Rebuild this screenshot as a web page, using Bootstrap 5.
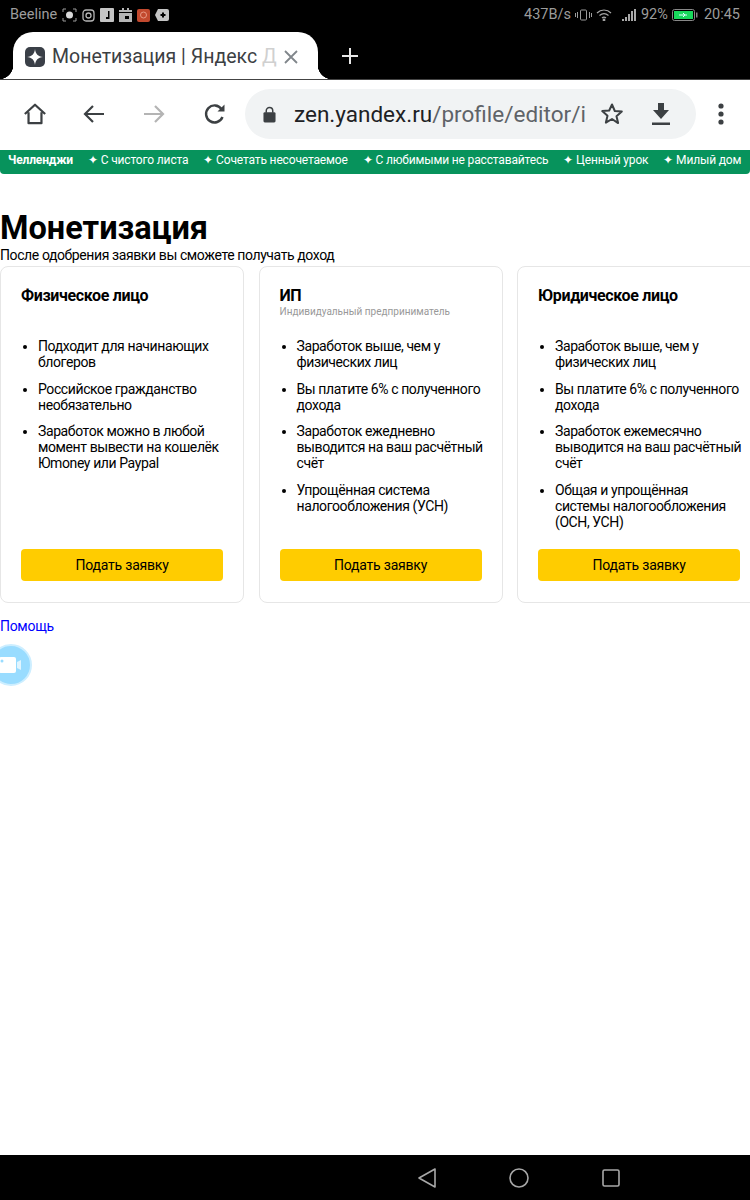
<!DOCTYPE html>
<html lang="ru">
<head>
  <meta charset="UTF-8" />
  <meta name="viewport" content="width=device-width, initial-scale=1" />
  <title>Монетизация | Яндекс Дзен</title>
  <link href="https://cdn.jsdelivr.net/npm/bootstrap@5.3.0/dist/css/bootstrap.min.css" rel="stylesheet" />
  <style>
    html, body { height: 1200px; overflow: hidden; }
    body { font-family: Roboto, "Liberation Sans", sans-serif; background: #fff; color: #000; }
    .phone { width: 750px; height: 1200px; overflow: hidden; }

    .status-row { height: 32px; background: #000; color: #9c9c9c; font-size: 14.5px; padding: 0 10px 2px; }
    .status-left { gap: 5px; }
    .status-time { margin-left: 6px; }
    .tab-row { height: 47px; background: #000; padding-left: 13px; }
    .tab-shape { width: 305px; height: 47px; background: #fff; border-radius: 20px 20px 0 0; padding: 3px 20px 0 12px; color: #3c4043; font-size: 19.5px; white-space: nowrap; position: relative; }
    .tab-shape::before, .tab-shape::after { content: ""; position: absolute; bottom: 0; width: 14px; height: 14px; }
    .tab-shape::before { left: -14px; background: radial-gradient(circle at 0 0, #000 14px, #fff 14.5px); }
    .tab-shape::after { right: -14px; background: radial-gradient(circle at 100% 0, #000 14px, #fff 14.5px); }
    .tab-icon { margin-right: 7px; }
    .tab-title span { color: #d0d0d0; }
    .new-tab { margin-left: 23px; }

    .tool-row { height: 71px; background: #fff; border-top: 1px solid #444; padding: 0 0 2px 23px; }
    .omnibox { width: 451px; height: 50px; background: #f1f3f4; border-radius: 25px; margin-left: 19px; padding: 0 0 0 18px; font-size: 22.5px; white-space: nowrap; }
    .url-text { width: 290px; color: #202124; margin-left: 18px; padding-top: 1px; }
    .url-text span { color: #5f6368; }

    .challenge-bar { height: 24px; background: #07935c; color: #fff; font-size: 12px; letter-spacing: -.15px; border-radius: 0 0 4px 4px; padding: 0 0 5px 8px; gap: 15px; white-space: nowrap; }

    .page-body { padding-top: 35px; }
    .page-title { font-size: 32.5px; font-weight: 700; line-height: 38px; margin: 0; }
    .page-sub { font-size: 14px; letter-spacing: -.4px; line-height: 17px; margin: 0; height: 19px; }

    .plans { gap: 14.5px; width: 790px; }
    .plan-card { width: 244px; height: 337px; border: 1px solid #e6e6e6; border-radius: 8px; padding: 19px 20px 21px; flex: none; }
    .plan-name { font-size: 16px; font-weight: 700; letter-spacing: -.35px; line-height: 20px; margin: 0; height: 20px; }
    .plan-note { font-size: 10px; line-height: 12px; color: #999; height: 32px; }
    .plan-list { font-size: 14px; letter-spacing: -.4px; line-height: 16px; padding-left: 17px; margin: 0 -4px 0 0; flex-grow: 1; }
    .plan-list li { margin-bottom: 10.5px; }
    .plan-btn { height: 32px; background: #fc0; color: #000; border-radius: 4px; border: 0; font-size: 14px; letter-spacing: -.2px; padding: 0; }

    .help-link { font-size: 14px; letter-spacing: -.3px; line-height: 18px; color: #00f; text-decoration: none; display: block; margin-top: 14px; }
    .rec-wrap { width: 32px; height: 42px; margin-top: 9px; margin-left: -10px; }
    .rec-dot { width: 42px; height: 42px; border-radius: 50%; background: #99dcff; border: 2px solid #cdeeff; flex: none; }

    .nav-row { height: 45px; background: #000; padding-left: 418px; gap: 73px; }
  </style>
</head>
<body>
  <div class="phone d-flex flex-column">
    <!-- status bar -->
    <div class="status-row d-flex align-items-center justify-content-between">
      <div class="status-left d-flex align-items-center">
        <span class="me-n1">Beeline</span>
        <svg width="15" height="14" viewBox="0 0 15 14" fill="none" stroke="#9c9c9c"><path d="M1 4V1h3M11 1h3v3M14 10v3h-3M4 13H1v-3"/><circle cx="7.5" cy="7" r="3.5" fill="#d8d8d8" stroke="none"/></svg>
        <svg width="13" height="13" viewBox="0 0 13 13" fill="none" stroke="#b5b5b5" stroke-width="1.3"><rect x="1" y="1" width="11" height="11" rx="3"/><circle cx="6.5" cy="6.5" r="2.5"/></svg>
        <svg width="14" height="14" viewBox="0 0 14 14"><rect width="14" height="14" rx="1" fill="#c4c4c4"/><path d="M8 3h1.5v8H6v-2h2z" fill="#000"/></svg>
        <svg width="13" height="14" viewBox="0 0 13 14"><path d="M0 2h13v2H0zM0 5h13v9H0z" fill="#b5b5b5"/><rect x="6" y="8" width="4" height="3" fill="#000"/><rect x="3" y="0" width="2" height="2" fill="#b5b5b5"/><rect x="8" y="0" width="2" height="2" fill="#b5b5b5"/></svg>
        <svg width="13" height="13" viewBox="0 0 13 13"><rect width="13" height="13" rx="2" fill="#c2492e"/><circle cx="6.5" cy="6" r="3" fill="none" stroke="#e89a85"/></svg>
        <svg width="14" height="12" viewBox="0 0 14 12"><path d="M3 0h9a2 2 0 0 1 2 2v8a2 2 0 0 1-2 2H3L0 6z" fill="#c4c4c4"/><path d="M7 3.500h2v1.500h1.500v2H9v1.500H7V7H5.500V5H7z" fill="#000"/></svg>
      </div>
      <div class="d-flex align-items-center">
        <span>437B/s</span>
        <svg class="ms-1" width="17" height="12" viewBox="0 0 17 12" fill="none" stroke="#9c9c9c" stroke-width="1"><rect x="5.500" y="1" width="6" height="10" rx="1"/><path d="M2.500 3v6M14.500 3v6M0.500 4v4M16.500 4v4"/></svg>
        <svg class="ms-1" width="16" height="12" viewBox="0 0 16 12" fill="none" stroke="#a8a8a8" stroke-width="1.200"><path d="M1 4c4-4 10-4 14 0M3.500 6.500c3-2.500 6-2.500 9 0M6 9c1.300-1 2.700-1 4 0"/><circle cx="8" cy="11" r="0.800" fill="#a8a8a8"/></svg>
        <svg style="margin-left:10px" width="15" height="12" viewBox="0 0 15 12" fill="#a8a8a8"><rect x="0" y="10" width="2" height="2"/><rect x="3" y="8" width="2" height="4"/><rect x="6" y="5" width="2" height="7"/><rect x="9" y="2" width="2" height="10"/><rect x="12" y="0" width="2" height="12"/></svg>
        <span class="ms-1">92%</span>
        <svg class="ms-1" width="26" height="12" viewBox="0 0 26 12"><rect x="0.500" y="0.500" width="22" height="11" rx="2" fill="#000" stroke="#888"/><rect x="2" y="2" width="19" height="8" fill="#18d95c"/><rect x="24" y="3.500" width="1.500" height="5" fill="#888"/><path d="M7 6h8M11 4l2 2-2 2" stroke="#dff" fill="none"/></svg>
        <span class="status-time">20:45</span>
      </div>
    </div>

    <!-- tabs -->
    <div class="tab-row d-flex align-items-end">
      <div class="tab-shape d-flex align-items-center">
        <svg width="20" height="20" viewBox="0 0 20 20" class="tab-icon flex-shrink-0"><rect width="20" height="20" rx="5" fill="#3a3f47"/><path d="M10 2c.5 5 3 7.500 8 8-5 .5-7.500 3-8 8-.5-5-3-7.500-8-8 5-.5 7.500-3 8-8z" fill="#fff"/></svg>
        <div class="tab-title">Монетизация | Яндекс <span>Д</span></div>
        <svg class="ms-auto flex-shrink-0" width="14" height="14" viewBox="0 0 14 14" stroke="#80868b" stroke-width="1.800"><path d="M1 1l12 12M13 1L1 13"/></svg>
      </div>
      <svg class="new-tab align-self-center" width="18" height="18" viewBox="0 0 18 18" stroke="#e8e8e8" stroke-width="2"><path d="M9 1v16M1 9h16"/></svg>
    </div>

    <!-- browser toolbar -->
    <div class="tool-row d-flex align-items-center">
      <svg width="24" height="24" viewBox="0 0 26 26" fill="none" stroke="#3c4043" stroke-width="2.400" stroke-linejoin="round"><path d="M2 13L13 3l11 10M6 11v12h14V11"/></svg>
      <svg style="margin-left:36px" width="22" height="20" viewBox="0 0 22 20" fill="none" stroke="#3c4043" stroke-width="2.200"><path d="M21 10H2M10 2l-8 8 8 8"/></svg>
      <svg style="margin-left:38px" width="22" height="20" viewBox="0 0 22 20" fill="none" stroke="#b4b4b4" stroke-width="2.200"><path d="M1 10h19M12 2l8 8-8 8"/></svg>
      <svg style="margin-left:39px" width="22" height="22" viewBox="0 0 22 22" fill="none" stroke="#3c4043" stroke-width="2.400"><path d="M18.500 14a8.500 8.500 0 1 1-1-8"/><path d="M20.500 1.500v7h-7z" fill="#3c4043" stroke="none"/></svg>
      <div class="omnibox d-flex align-items-center">
        <svg width="13" height="17" viewBox="0 0 14 18" class="flex-shrink-0"><rect x="0.500" y="6.500" width="13" height="11" rx="1.500" fill="#3c4043"/><path d="M3.500 7V5a3.500 3.500 0 0 1 7 0v2" fill="none" stroke="#3c4043" stroke-width="1.600"/></svg>
        <div class="url-text">zen.yandex.ru<span>/profile/editor/i</span></div>
        <svg class="flex-shrink-0" style="margin-left:16px" width="24" height="24" viewBox="0 0 24 24" fill="none" stroke="#3c4043" stroke-width="2" stroke-linejoin="round"><path d="M12 2.500l2.800 6.500 7 .6-5.300 4.600 1.600 6.900L12 17l-6.100 3.600 1.600-6.900L2.200 9.100l7-.6z"/></svg>
        <svg class="flex-shrink-0" style="margin-left:28px" width="18" height="22" viewBox="0 0 18 22" fill="#3c4043"><path d="M6 0h6v7h5l-8 9-8-9h5z"/><rect y="19.500" width="18" height="2.500"/></svg>
      </div>
      <svg style="margin-left:22px" width="6" height="22" viewBox="0 0 6 22" fill="#3c4043"><circle cx="3" cy="3" r="2.600"/><circle cx="3" cy="11" r="2.600"/><circle cx="3" cy="19" r="2.600"/></svg>
    </div>

    <!-- green challenge strip -->
    <div class="challenge-bar d-flex align-items-center">
      <b>Челленджи</b>
      <span>✦ С чистого листа</span>
      <span>✦ Сочетать несочетаемое</span>
      <span>✦ С любимыми не расставайтесь</span>
      <span>✦ Ценный урок</span>
      <span>✦ Милый дом</span>
    </div>

    <!-- page -->
    <div class="page-body flex-grow-1">
      <h1 class="page-title">Монетизация</h1>
      <p class="page-sub">После одобрения заявки вы сможете получать доход</p>
      <div class="plans d-flex">
        <div class="plan-card d-flex flex-column">
          <h2 class="plan-name">Физическое лицо</h2>
          <div class="plan-note"></div>
          <ul class="plan-list">
            <li>Подходит для начинающих блогеров</li>
            <li>Российское гражданство необязательно</li>
            <li>Заработок можно в любой момент вывести на кошелёк Юmoney или Paypal</li>
          </ul>
          <button class="btn plan-btn w-100">Подать заявку</button>
        </div>
        <div class="plan-card d-flex flex-column">
          <h2 class="plan-name">ИП</h2>
          <div class="plan-note">Индивидуальный предприниматель</div>
          <ul class="plan-list">
            <li>Заработок выше, чем у физических лиц</li>
            <li>Вы платите 6% с полученного дохода</li>
            <li>Заработок ежедневно выводится на ваш расчётный счёт</li>
            <li>Упрощённая система налогообложения (УСН)</li>
          </ul>
          <button class="btn plan-btn w-100">Подать заявку</button>
        </div>
        <div class="plan-card d-flex flex-column">
          <h2 class="plan-name">Юридическое лицо</h2>
          <div class="plan-note"></div>
          <ul class="plan-list">
            <li>Заработок выше, чем у физических лиц</li>
            <li>Вы платите 6% с полученного дохода</li>
            <li>Заработок ежемесячно выводится на ваш расчётный счёт</li>
            <li>Общая и упрощённая системы налогообложения (ОСН, УСН)</li>
          </ul>
          <button class="btn plan-btn w-100">Подать заявку</button>
        </div>
      </div>
      <a class="help-link" href="#">Помощь</a>
      <div class="rec-wrap">
        <div class="rec-dot d-flex align-items-center justify-content-center">
          <svg width="28" height="18" viewBox="0 0 28 18" fill="#fff"><rect x="2" y="1" width="17" height="16" rx="2"/><path d="M20 6l4-2v10l-4-2z" opacity=".7"/><circle cx="5" cy="5" r="1.500" fill="#99dcff"/></svg>
        </div>
      </div>
    </div>

    <!-- android nav -->
    <div class="nav-row d-flex align-items-center">
      <svg width="18" height="20" viewBox="0 0 18 20" fill="none" stroke="#a8a8a8" stroke-width="1.600" stroke-linejoin="round"><path d="M17 1v18L1 10z"/></svg>
      <svg width="20" height="20" viewBox="0 0 20 20" fill="none" stroke="#a8a8a8" stroke-width="1.600"><circle cx="10" cy="10" r="9"/></svg>
      <svg width="18" height="18" viewBox="0 0 18 18" fill="none" stroke="#a8a8a8" stroke-width="1.600"><rect x="1" y="1" width="16" height="16" rx="1.500"/></svg>
    </div>
  </div>
  <script src="https://cdn.jsdelivr.net/npm/bootstrap@5.3.0/dist/js/bootstrap.bundle.min.js"></script>
</body>
</html>
